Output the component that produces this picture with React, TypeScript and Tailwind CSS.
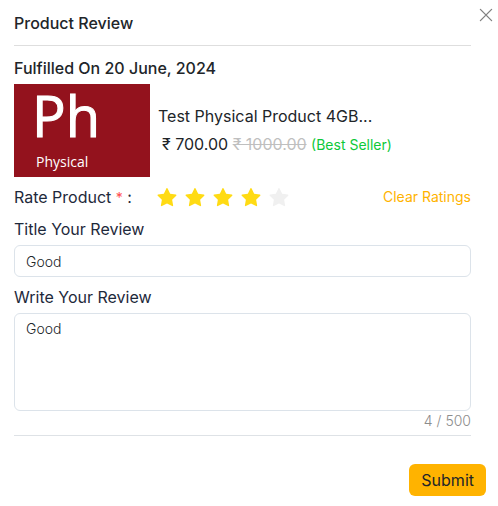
import React, { useState } from 'react'
import { AiFillStar } from 'react-icons/ai'

const MAX_LENGTH = 500

const ProductImage = () => (
  <div
    role="img"
    aria-label="Physical product"
    className="flex h-[93px] w-[136px] shrink-0 flex-col bg-[#93121d] pl-[22px] font-['Open_Sans',sans-serif] text-white"
  >
    <span className="-ml-1 text-[56px] leading-[62px] [-webkit-text-stroke:1px_white]">
      Ph
    </span>
    <span className="text-sm leading-8">Physical</span>
  </div>
)

const Rating = ({
  value,
  onChange,
}: {
  value: number
  onChange: (value: number) => void
}) => (
  <div
    className="flex gap-2 pt-0.5"
    role="radiogroup"
    aria-label="Rate Product"
  >
    {[1, 2, 3, 4, 5].map((star) => (
      <label key={star} className="relative cursor-pointer">
        <input
          type="radio"
          name="rating"
          value={star}
          checked={value === star}
          onChange={() => onChange(star)}
          aria-label={`${star} stars`}
          className="sr-only"
        />
        <AiFillStar
          viewBox="64 64 896 896"
          className={
            star <= value
              ? 'size-5 text-[#ffdb14]'
              : 'size-5 text-[#f0f0f0]'
          }
        />
      </label>
    ))}
  </div>
)

const App = () => {
  const [rating, setRating] = useState(4)
  const [state, setState] = useState({
    title: 'Good',
    review: 'Good',
  })

  const handleChange = (
    e:
      | React.ChangeEvent<HTMLInputElement>
      | React.ChangeEvent<HTMLTextAreaElement>
  ) => {
    setState({
      ...state,
      [e.target.name]: e.target.value,
    })
  }

  return (
    <main className="relative bg-white pl-3.5 pr-3 font-['Inter',sans-serif] text-base text-[#212529]">
      <button
        type="button"
        aria-label="Close"
        className="absolute right-1 top-[7px] text-[#808080]"
      >
        <svg
          viewBox="0 0 16 16"
          fill="none"
          stroke="currentColor"
          strokeWidth="1.3"
          strokeLinecap="round"
          className="size-4"
        >
          <path d="M2.4 2.4l11.2 11.2M13.6 2.4L2.4 13.6" />
        </svg>
      </button>
      <form onSubmit={(e) => e.preventDefault()}>
        <div className="mr-[15px] border-b border-[#dee2e6]">
          <h1 className="border-b border-[#dedede] pb-2.5 pt-[11px] font-medium leading-6">
            Product Review
          </h1>
          <h2 className="pb-1 pt-2.5 font-medium leading-6">
            Fulfilled On 20 June, 2024
          </h2>
          <div className="flex items-center gap-2">
            <ProductImage />
            <div className="pb-0.5 leading-7">
              <p>Test Physical Product 4GB...</p>
              <p className="pl-1">
                ₹ 700.00 <del className="text-[#bfbfbf]">₹ 1000.00</del>{' '}
                <span className="text-sm text-[#0dc939]">(Best Seller)</span>
              </p>
            </div>
          </div>
          <div className="flex h-10 items-center">
            <span className="w-[143px] text-[#1e293b]">
              Rate Product <span className="text-sm text-[#ff4d4f]">*</span> :
            </span>
            <Rating value={rating} onChange={setRating} />
            <button
              type="button"
              onClick={() => setRating(0)}
              className="ml-auto text-sm text-[#ffb300]"
            >
              Clear Ratings
            </button>
          </div>
          <label htmlFor="title" className="block pb-1 leading-6 text-[#1e293b]">
            Title Your Review
          </label>
          <input
            id="title"
            name="title"
            value={state.title}
            onChange={handleChange}
            className="block h-8 w-full rounded-md border border-[#dce3ea] px-[11px] text-sm font-light outline-none"
          />
          <label
            htmlFor="review"
            className="block pb-1 pt-2 leading-6 text-[#1e293b]"
          >
            Write Your Review
          </label>
          <textarea
            id="review"
            name="review"
            rows={4}
            maxLength={MAX_LENGTH}
            value={state.review}
            onChange={handleChange}
            className="block h-[98px] w-full resize-none rounded-md border border-[#dce3ea] px-[11px] py-1 text-sm font-light leading-[22px] outline-none"
          />
          <p className="pb-1 text-right text-sm font-light text-[#8c8c8c]">
            {state.review.length} / {MAX_LENGTH}
          </p>
        </div>
        <div className="flex justify-end pt-7">
          <button
            type="submit"
            className="h-8 rounded-md bg-[#ffb300] px-3 text-[#212529]"
          >
            Submit
          </button>
        </div>
      </form>
    </main>
  )
}

export default App
